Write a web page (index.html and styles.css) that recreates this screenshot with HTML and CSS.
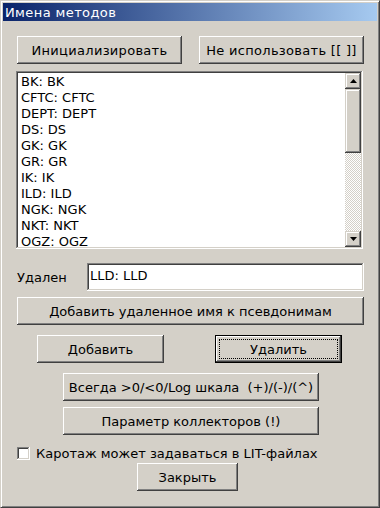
FILE: index.html
```html
<!DOCTYPE html>
<html lang="ru">
<head>
  <meta charset="UTF-8">
  <title>Имена методов</title>
  <link rel="stylesheet" href="styles.css">
</head>
<body>
  <div class="window">
    <div class="title-bar">Имена методов</div>
    <div class="content">
      <div class="row top-row">
        <button class="btn btn-half">Инициализировать</button>
        <button class="btn btn-half">Не использовать [[ ]]</button>
      </div>

      <div class="list sunken">
        <ul class="items">
          <li>BK: BK</li>
          <li>CFTC: CFTC</li>
          <li>DEPT: DEPT</li>
          <li>DS: DS</li>
          <li>GK: GK</li>
          <li>GR: GR</li>
          <li>IK: IK</li>
          <li>ILD: ILD</li>
          <li>NGK: NGK</li>
          <li>NKT: NKT</li>
          <li>OGZ: OGZ</li>
        </ul>
        <div class="scrollbar">
          <div class="sb-btn">
            <svg width="7" height="4" viewBox="0 0 7 4"><polygon points="3.5,0 7,4 0,4" fill="#000"/></svg>
          </div>
          <div class="sb-thumb"></div>
          <div class="sb-track"></div>
          <div class="sb-btn">
            <svg width="7" height="4" viewBox="0 0 7 4"><polygon points="0,0 7,0 3.5,4" fill="#000"/></svg>
          </div>
        </div>
      </div>

      <div class="row field-row">
        <label class="field-label">Удален</label>
        <div class="field sunken">LLD: LLD</div>
      </div>

      <button class="btn btn-wide add-alias">Добавить удаленное имя к псевдонимам</button>

      <div class="row pair-row">
        <button class="btn btn-pair">Добавить</button>
        <button class="btn btn-pair btn-default">Удалить</button>
      </div>

      <button class="btn btn-mid always">Всегда &gt;0/&lt;0/Log шкала&nbsp; (+)/(-)/(^)</button>
      <button class="btn btn-mid collectors">Параметр коллекторов (!)</button>

      <div class="row check-row">
        <span class="checkbox sunken"></span>
        <span>Каротаж может задаваться в LIT-файлах</span>
      </div>

      <button class="btn btn-close">Закрыть</button>
    </div>
  </div>
</body>
</html>
```

FILE: styles.css
```css
:root {
  --face: #d4d0c8;
  --shade: #808080;
  --dark: #404040;
  --light: #fff;
  --ui-font: 'DejaVu Sans', sans-serif;
}
html, body {
  margin: 0; padding: 0;
  background: var(--face);
  font-family: var(--ui-font);
  font-size: 13px;
  color: #000;
}
.window {
  width: 380px;
  height: 508px;
  box-sizing: border-box;
  border: 1px solid;
  border-color: var(--face) var(--dark) var(--dark) var(--face);
  box-shadow: inset 1px 1px var(--light), inset -1px -1px var(--shade);
  padding: 2px;
  background: var(--face);
}
.title-bar {
  height: 18px;
  box-sizing: border-box;
  padding: 1px 0 0 2px;
  line-height: 17px;
  color: #fff;
  letter-spacing: 0.4px;
  background: linear-gradient(to right, #0a246a, #a6caf0);
  white-space: nowrap;
}
.content {
  padding: 0 13px 0 14px;
}
.row { display: flex; align-items: center; }

/* кнопки */
.btn {
  display: block;
  height: 28px;
  padding: 0;
  border: none;
  background: var(--face);
  font-family: var(--ui-font);
  font-size: 13px;
  color: #000;
  white-space: nowrap;
  box-shadow: inset -1px -1px var(--dark), inset 1px 1px var(--light),
              inset -2px -2px var(--shade), inset 2px 2px var(--face);
}
.btn-default {
  border: 1px solid #000;
  outline: 1px dotted #000;
  outline-offset: -5px;
}
.top-row { margin-top: 15px; gap: 17px; }
.btn-half { width: 165px; letter-spacing: 0.3px; }
.btn-wide { width: 347px; }
.add-alias { margin-top: 6px; }
.pair-row { margin-top: 10px; padding-left: 20px; gap: 51px; }
.btn-pair { width: 127px; }
.btn-mid { width: 256px; margin-left: 46px; }
.always { margin-top: 10px; }
.collectors { margin-top: 6px; }
.btn-close { width: 101px; margin: 3px 0 0 120px; }

/* поля */
.sunken {
  background: #fff;
  box-shadow: inset -1px -1px var(--light), inset 1px 1px var(--shade),
              inset -2px -2px var(--face), inset 2px 2px var(--dark);
}
.list {
  display: flex;
  margin: 7px 1px 0 -1px;
  width: 347px;
  height: 178px;
  box-sizing: border-box;
  padding: 2px;
}
.items {
  flex: 1;
  list-style: none;
  margin: 0;
  padding: 1px 0 0 3px;
  line-height: 16px;
  overflow: hidden;
}
.scrollbar {
  width: 16px;
  display: flex;
  flex-direction: column;
}
.sb-btn {
  height: 16px;
  display: flex;
  align-items: center;
  justify-content: center;
  background: var(--face);
  box-shadow: inset -1px -1px var(--dark), inset 1px 1px var(--face),
              inset -2px -2px var(--shade), inset 2px 2px var(--light);
}
.sb-thumb {
  height: 64px;
  background: var(--face);
  box-shadow: inset -1px -1px var(--dark), inset 1px 1px var(--face),
              inset -2px -2px var(--shade), inset 2px 2px var(--light);
}
.sb-track {
  flex: 1;
  background: repeating-conic-gradient(#fff 0 25%, var(--face) 0 50%) 0 0 / 2px 2px;
}
.field-row { margin-top: 14px; }
.field-label { width: 70px; }
.field {
  flex: 1;
  height: 28px;
  box-sizing: border-box;
  padding: 5px 3px 0;
  line-height: 16px;
}
.check-row { margin-top: 12px; height: 13px; gap: 6px; }
.checkbox {
  width: 13px;
  height: 13px;
  flex-shrink: 0;
}
```
